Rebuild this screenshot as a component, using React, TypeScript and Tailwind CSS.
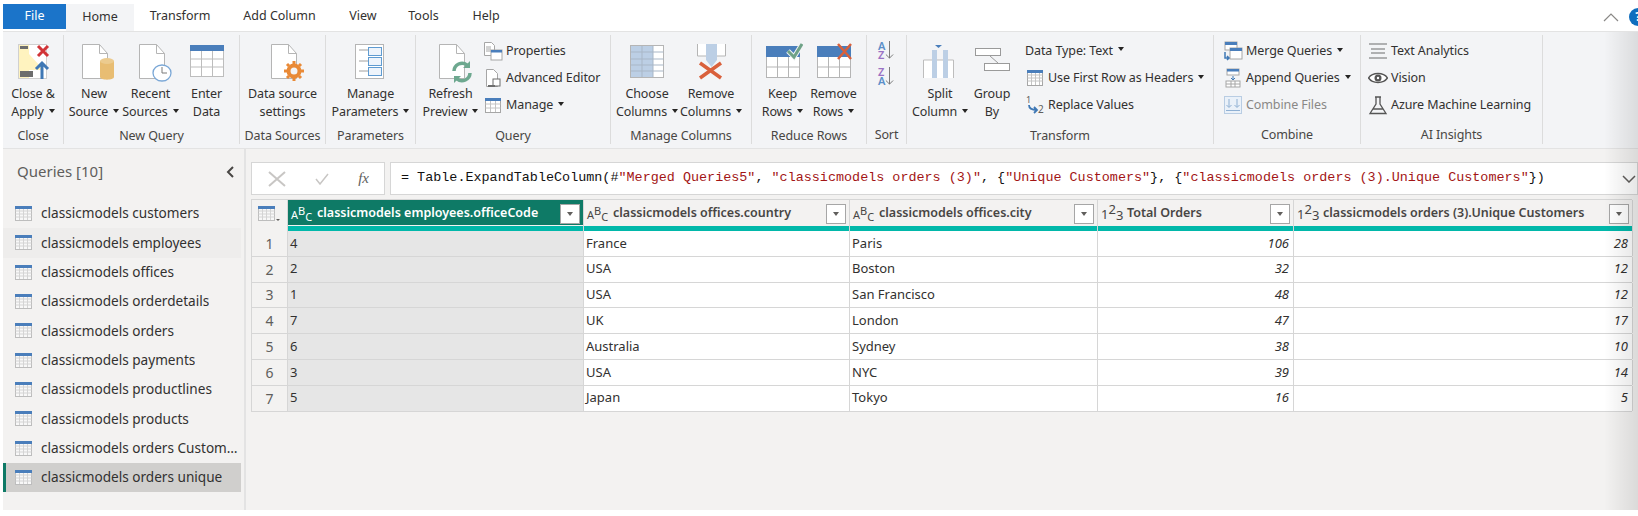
import React from 'react';

const font = "font-['Noto_Sans','Open_Sans',sans-serif]";

const TableIcon = ({ className = 'w-[17px] h-[15px]' }: { className?: string }) => (
  <svg viewBox="0 0 17 15" className={className}>
    <rect x="0.5" y="0.5" width="16" height="14" fill="#f8f8f8" stroke="#bdbdbd" />
    <path d="M0.5 5h16M0.5 8h16M0.5 11h16M4.500 3v11M8.500 3v11M12.500 3v11" stroke="#d4d4d4" strokeWidth="1" fill="none" />
    <rect x="0" y="0" width="17" height="3" fill="#4a7ebb" />
  </svg>
);

const Doc = ({ children }: { children?: React.ReactNode }) => (
  <svg viewBox="0 0 40 38" className="w-[40px] h-[38px] overflow-visible">
    <path d="M8.500 2.500h17l8 9v25h-25z" fill="#fff" stroke="#b5b5b5" />
    <path d="M25.500 2.500v9h8" fill="none" stroke="#b5b5b5" />
    {children}
  </svg>
);

const CloseApply = () => (
  <svg viewBox="0 0 40 38" className="w-[40px] h-[38px]">
    <rect x="5.500" y="2.500" width="28" height="34" fill="#fff" stroke="#d0d0d0" />
    <path d="M6 3h10v33H6z" fill="#fff3bf" />
    <path d="M16 12l12 13v3H16z" fill="#fff3bf" />
    <rect x="7" y="4" width="8" height="3" fill="#6d6d6d" />
    <rect x="7" y="29" width="13" height="6" fill="#6d6d6d" />
    <path d="M25 4l10 10M35 4L25 14" stroke="#d13438" strokeWidth="3" />
    <path d="M29 37V21M23 27l6-6 6 6" stroke="#3f78b5" strokeWidth="3" fill="none" />
  </svg>
);

const EnterData = () => (
  <svg viewBox="0 0 40 38" className="w-[40px] h-[38px]">
    <rect x="3.500" y="3.500" width="33" height="31" fill="#fff" stroke="#bdbdbd" />
    <path d="M3.500 17h33M3.500 25h33M14.500 9v25M25.500 9v25" stroke="#bdbdbd" fill="none" />
    <rect x="3" y="3" width="34" height="6" fill="#4a7ebb" />
  </svg>
);

const ManageParams = () => (
  <svg viewBox="0 0 40 38" className="w-[40px] h-[38px]">
    <rect x="4.500" y="2.500" width="28" height="34" fill="#fff" stroke="#b5b5b5" />
    <path d="M8 8h9M8 19h9M8 29h9" stroke="#a0a0a0" />
    <rect x="17.500" y="5.500" width="13" height="8" fill="#eef4fb" stroke="#5f9bd1" />
    <rect x="17.500" y="15.500" width="13" height="8" fill="#eef4fb" stroke="#5f9bd1" />
    <rect x="17.500" y="25.500" width="13" height="8" fill="#eef4fb" stroke="#5f9bd1" />
  </svg>
);

const ChooseColumns = () => (
  <svg viewBox="0 0 40 38" className="w-[40px] h-[38px]">
    <rect x="3.500" y="3.500" width="33" height="32" fill="#fff" stroke="#b5b5b5" />
    <rect x="4" y="4" width="22" height="31" fill="#bccfe5" />
    <path d="M3.500 10h33M3.500 17h33M3.500 23h33M3.500 29h33M15 4v31M26 4v31" stroke="#a9b7c7" fill="none" />
  </svg>
);

const RemoveColumns = () => (
  <svg viewBox="0 0 40 38" className="w-[40px] h-[38px]">
    <path d="M6.500 2v12h28V2" fill="#fff" stroke="#b5b5b5" />
    <path d="M15 2h11v16l-5.500 7-5.500-7z" fill="#bccfe5" />
    <path d="M9 21l21 15M30 21L9 36" stroke="#d9603b" strokeWidth="3.500" />
  </svg>
);

const RowsIcon = ({ keep }: { keep?: boolean }) => (
  <svg viewBox="0 0 40 38" className="w-[40px] h-[38px]">
    <rect x="3.500" y="14.500" width="33" height="21" fill="#fff" stroke="#b5b5b5" />
    <path d="M3.500 25h33M14.500 14v21M25.500 14v21" stroke="#b5b5b5" fill="none" />
    <rect x="3" y="4" width="34" height="11" fill="#4a7ebb" />
    {keep ? (
      <>
        <path d="M25 9l6 6 8-13" stroke="#f3f4f6" strokeWidth="5" fill="none" />
        <path d="M25 9l6 6 8-13" stroke="#6fa287" strokeWidth="3" fill="none" />
      </>
    ) : (
      <path d="M24 2l13 15M37 2L24 17" stroke="#d9603b" strokeWidth="2.500" />
    )}
  </svg>
);

const SplitColumn = () => (
  <svg viewBox="0 0 40 38" className="w-[40px] h-[38px]">
    <path d="M3.500 36V18h30v18" fill="#fff" stroke="#bdbdbd" />
    <rect x="12" y="8" width="5" height="28" fill="#bccfe5" />
    <rect x="23" y="8" width="5" height="28" fill="#bccfe5" />
    <path d="M15 3h7l-3.500 3z" fill="#4a7ebb" />
  </svg>
);

const GroupBy = () => (
  <svg viewBox="0 0 40 38" className="w-[40px] h-[38px]">
    <rect x="3.500" y="6.500" width="25" height="7" fill="#fff" stroke="#9a9a9a" />
    <rect x="12.500" y="21.500" width="25" height="7" fill="#fff" stroke="#9a9a9a" />
    <path d="M18 14l8 7" stroke="#9a9a9a" />
  </svg>
);

const SmallSvg = ({ children }: { children: React.ReactNode }) => (
  <svg viewBox="0 0 20 20" className="w-[20px] h-[20px] shrink-0">
    {children}
  </svg>
);

const SmallIcons: Record<string, React.ReactNode> = {
  properties: (
    <>
      <path d="M1.500 1.500h7l3 3v10h-10z" fill="#fff" stroke="#a6a6a6" />
      <path d="M3 6h5M3 8h5M3 10h5" stroke="#a6a6a6" />
      <rect x="8" y="9" width="11" height="10" fill="#fff" stroke="#a6a6a6" />
      <rect x="8" y="9" width="11" height="2.500" fill="#4a7ebb" />
    </>
  ),
  editor: (
    <>
      <path d="M3.500 1.500h7l4 4v13h-11z" fill="#fff" stroke="#a6a6a6" />
      <rect x="10" y="11" width="7" height="7" fill="#fff" stroke="#6d6d6d" />
      <rect x="5" y="17" width="7" height="2" fill="#6d6d6d" />
    </>
  ),
  manage: (
    <>
      <rect x="2.500" y="3.500" width="15" height="14" fill="#fff" stroke="#a6a6a6" />
      <path d="M2.500 9h15M2.500 13h15M7.500 6v11M12.500 6v11" stroke="#c4c4c4" fill="none" />
      <rect x="2" y="3" width="16" height="3" fill="#4a7ebb" />
    </>
  ),
  firstRow: (
    <>
      <rect x="2.500" y="2.500" width="15" height="15" fill="#fff" stroke="#a6a6a6" />
      <path d="M2.500 7h15M2.500 10h15M2.500 13h15M6.500 2v15M10.500 2v15M14.500 2v15" stroke="#c4c4c4" fill="none" />
      <rect x="2" y="2" width="16" height="3" fill="#4a7ebb" />
    </>
  ),
  replace: (
    <>
      <text x="1" y="8" fontSize="9" fill="#605e5c">1</text>
      <text x="13" y="18" fontSize="10" fill="#605e5c">2</text>
      <path d="M4 10c0 4 3 5 8 5M9 12l3 3-3 3" stroke="#3f78b5" strokeWidth="1.800" fill="none" />
    </>
  ),
  merge: (
    <>
      <rect x="2" y="1" width="12" height="8" fill="#fff" stroke="#a6a6a6" />
      <rect x="2" y="1" width="12" height="3" fill="#4a7ebb" />
      <rect x="7" y="7" width="12" height="11" fill="#fff" stroke="#a6a6a6" />
      <rect x="7" y="7" width="12" height="3" fill="#4a7ebb" />
      <path d="M2 11v6h3M4 15l2 2-2 2" stroke="#3f78b5" strokeWidth="1.500" fill="none" />
    </>
  ),
  append: (
    <>
      <rect x="4" y="1" width="12" height="6" fill="#fff" stroke="#a6a6a6" />
      <rect x="4" y="1" width="12" height="2.500" fill="#4a7ebb" />
      <path d="M10 8v4M8 10l2 2 2-2" stroke="#3f78b5" fill="none" />
      <rect x="3" y="13" width="14" height="6" fill="#fff" stroke="#a6a6a6" />
      <path d="M3 16h14M8 13v6M12 13v6" stroke="#a6a6a6" />
    </>
  ),
  combine: (
    <>
      <rect x="1.500" y="1.500" width="17" height="17" fill="#eaf1f9" stroke="#b9cde3" />
      <path d="M6 4v8M3.500 10L6 12.500 8.500 10M14 4v8M11.500 10l2.500 2.500 2.500-2.500M3 15.500h14" stroke="#8fb0d3" fill="none" />
    </>
  ),
  text: <path d="M1 3h18M3 8h14M3 12h14M1 17h18" stroke="#6d6d6d" strokeWidth="1.200" />,
  vision: (
    <>
      <path d="M0.500 10c4-6 15-6 19 0-4 6-15 6-19 0z" fill="#fff" stroke="#555" strokeWidth="1.500" />
      <circle cx="10" cy="10" r="3.500" fill="#555" />
      <circle cx="10" cy="10" r="1.200" fill="#fff" />
    </>
  ),
  azure: <path d="M7 2h6M8 2v7L2 18.500h16L12 9V2M5 14h10" stroke="#555" strokeWidth="1.300" fill="none" />,
};

const Caret = () => (
  <span className="inline-block ml-[5px] align-middle w-0 h-0 border-x-[3.500px] border-x-transparent border-t-[4px] border-t-[#252423] mb-[3px]" />
);

const Big = ({
  width,
  icon,
  line1,
  line2,
  caret,
}: {
  width: number;
  icon: React.ReactNode;
  line1: string;
  line2: string;
  caret?: boolean;
}) => (
  <div className="flex flex-col items-center shrink-0" style={{ width }}>
    <div className="h-[38px] mt-[6px] mb-[5px] flex justify-center">{icon}</div>
    <div className="h-[18px] leading-[18px] whitespace-nowrap">{line1}</div>
    <div className="h-[18px] leading-[18px] whitespace-nowrap">
      {line2}
      {caret && <Caret />}
    </div>
  </div>
);

const Small = ({ icon, label, caret, dim }: { icon: string; label: string; caret?: boolean; dim?: boolean }) => (
  <div className={`h-[27px] flex items-center gap-[3px] whitespace-nowrap ${dim ? 'text-[#8a8886]' : ''}`}>
    <SmallSvg>{SmallIcons[icon]}</SmallSvg>
    <span>
      {label}
      {caret && <Caret />}
    </span>
  </div>
);

const Group = ({
  width,
  label,
  className = '',
  children,
}: {
  width: number;
  label: string;
  className?: string;
  children: React.ReactNode;
}) => (
  <div className="h-[109px] mt-[3px] border-r border-[#dcdcdc] flex flex-col shrink-0" style={{ width }}>
    <div className={`h-[89px] pt-[1px] flex ${className}`}>{children}</div>
    <div className="text-center text-[#484644] leading-[18px] mt-[6px]">{label}</div>
  </div>
);

const queries = [
  'classicmodels customers',
  'classicmodels employees',
  'classicmodels offices',
  'classicmodels orderdetails',
  'classicmodels orders',
  'classicmodels payments',
  'classicmodels productlines',
  'classicmodels products',
  'classicmodels orders Customers',
  'classicmodels orders unique',
];

const rows = [
  ['4', 'France', 'Paris', '106', '28'],
  ['2', 'USA', 'Boston', '32', '12'],
  ['1', 'USA', 'San Francisco', '48', '12'],
  ['7', 'UK', 'London', '47', '17'],
  ['6', 'Australia', 'Sydney', '38', '10'],
  ['3', 'USA', 'NYC', '39', '14'],
  ['5', 'Japan', 'Tokyo', '16', '5'],
];

const gridCols = 'grid grid-cols-[36px_296px_266px_248px_196px_339px]';

const TypeGlyph = ({ kind, light }: { kind: 'abc' | '123'; light?: boolean }) => (
  <span className={`inline-flex items-start w-[21px] shrink-0 text-[11px] leading-none font-normal ${light ? 'text-white' : 'text-[#484644]'}`}>
    {kind === 'abc' ? (
      <>
        <span className="mt-[3px]">A</span>
        <span className="mt-[-1px]">B</span>
        <span className="mt-[5px]">C</span>
      </>
    ) : (
      <>
        <span className="mt-[3px] text-[13px]">1</span>
        <span className="text-[13px] mt-[-2px]">2</span>
        <span className="mt-[4px] text-[13px]">3</span>
      </>
    )}
  </span>
);

const HeaderCell = ({ kind, title, active }: { kind: 'abc' | '123'; title: string; active?: boolean }) => (
  <div className="border-r border-[#d6d6d6] flex flex-col">
    <div className={`h-[25px] flex items-center pl-[3px] pr-[3px] pt-[2px] font-semibold ${active ? 'bg-[#0e7a66] text-white' : 'bg-[#f3f2f1] text-[#484644]'}`}>
      <TypeGlyph kind={kind} light={active} />
      <span className="ml-[5px] whitespace-nowrap text-[12.500px] tracking-normal">{title}</span>
      <span className="ml-auto w-[20px] h-[20px] bg-white border border-[#a6a6a6] flex items-center justify-center">
        <span className="w-0 h-0 border-x-[3.500px] border-x-transparent border-t-[4px] border-t-[#605e5c]" />
      </span>
    </div>
    <div className="h-[1px] bg-[#f3f2f1]" />
    <div className="h-[5px] bg-[#01b8aa]" />
  </div>
);

export default function App() {
  return (
    <div className={`${font} relative w-[1638px] h-[516px] overflow-hidden bg-white pl-[3px] pt-[4px] pb-[6px] flex flex-col text-[12.500px] tracking-[-0.1px] text-[#323130]`}>
      {/* tabs */}
      <div className="h-[27px] flex text-[12.500px] tracking-normal text-[#323130] shrink-0">
        <div className="w-[63px] h-[25px] bg-[#1b74c9] text-white flex items-center justify-center">File</div>
        <div className="w-[68px] h-[27px] bg-[#f3f4f6] flex items-center justify-center">Home</div>
        <div className="w-[92px] flex items-center justify-center h-[25px]">Transform</div>
        <div className="w-[107px] flex items-center justify-center h-[25px]">Add Column</div>
        <div className="w-[60px] flex items-center justify-center h-[25px]">View</div>
        <div className="w-[61px] flex items-center justify-center h-[25px]">Tools</div>
        <div className="w-[64px] flex items-center justify-center h-[25px]">Help</div>
        <div className="ml-auto h-[25px] flex items-center gap-[10px] mr-[-9px]">
          <svg viewBox="0 0 16 10" className="w-[16px] h-[10px]">
            <path d="M1 9l7-7 7 7" stroke="#8a8886" strokeWidth="1.200" fill="none" />
          </svg>
          <span className="w-[18px] h-[18px] rounded-full bg-[#106ebe] text-white text-[12px] font-bold flex items-center justify-center">?</span>
        </div>
      </div>

      {/* ribbon */}
      <div className="h-[118px] bg-[#f3f4f6] border-t border-b border-[#e3e3e3] flex shrink-0 leading-[18px]">
        <Group width={61} label="Close">
          <Big width={60} icon={<CloseApply />} line1="Close &" line2="Apply" caret />
        </Group>
        <Group width={176} label="New Query" className="pl-[2px]">
          <Big
            width={56}
            icon={
              <Doc>
                <path d="M26 19v16c0 3.500 14 3.500 14 0V19z" fill="#e8bd73" />
                <ellipse cx="33" cy="19" rx="7" ry="3" fill="#eccb8f" />
              </Doc>
            }
            line1="New"
            line2="Source"
            caret
          />
          <Big
            width={57}
            icon={
              <Doc>
                <ellipse cx="31" cy="31" rx="9" ry="8" fill="#fff" stroke="#7aa7d6" strokeWidth="1.300" />
                <path d="M31 25v6h5" stroke="#7a7a7a" fill="none" />
              </Doc>
            }
            line1="Recent"
            line2="Sources"
            caret
          />
          <Big width={55} icon={<EnterData />} line1="Enter" line2="Data" />
        </Group>
        <Group width={86} label="Data Sources">
          <Big
            width={85}
            icon={
              <Doc>
                <circle cx="31" cy="29" r="5.500" fill="#f3f4f6" stroke="#e98a37" strokeWidth="4" />
                <path d="M31 19v3M31 36v3M21 29h3M38 29h3M24 22l2 2M36 34l2 2M24 36l2-2M36 24l2-2" stroke="#e98a37" strokeWidth="3" />
              </Doc>
            }
            line1="Data source"
            line2="settings"
          />
        </Group>
        <Group width={90} label="Parameters">
          <Big width={89} icon={<ManageParams />} line1="Manage" line2="Parameters" caret />
        </Group>
        <Group width={195} label="Query" className="pl-[5px]">
          <Big
            width={59}
            icon={
              <Doc>
                <path d="M23 29a8 8 0 0 1 13-6M39 31a8 8 0 0 1-13 6" stroke="#6da88f" strokeWidth="3.500" fill="none" />
                <path d="M39 19v7h-7zM23 41v-7h7z" fill="#6da88f" />
              </Doc>
            }
            line1="Refresh"
            line2="Preview"
            caret
          />
          <div className="ml-[3px] pt-[1px]">
            <Small icon="properties" label="Properties" />
            <Small icon="editor" label="Advanced Editor" />
            <Small icon="manage" label="Manage" caret />
          </div>
        </Group>
        <Group width={141} label="Manage Columns" className="pl-[4px]">
          <Big width={64} icon={<ChooseColumns />} line1="Choose" line2="Columns" caret />
          <Big width={64} icon={<RemoveColumns />} line1="Remove" line2="Columns" caret />
        </Group>
        <Group width={115} label="Reduce Rows" className="pl-[5px]">
          <Big width={51} icon={<RowsIcon keep />} line1="Keep" line2="Rows" caret />
          <Big width={51} icon={<RowsIcon />} line1="Remove" line2="Rows" caret />
        </Group>
        <Group width={40} label="Sort">
          <div className="w-full text-[11px] font-semibold leading-[9.500px] pt-[1px] pl-[11px]">
            <div className="flex items-center h-[26px]">
              <div>
                <div className="text-[#5b8fc9]">A</div>
                <div className="text-[#9a72c4]">Z</div>
              </div>
              <svg viewBox="0 0 10 20" className="w-[9px] h-[20px]">
                <path d="M5 0v19M1 15l4 4 4-4" stroke="#6d6d6d" fill="none" />
              </svg>
            </div>
            <div className="flex items-center h-[26px]">
              <div>
                <div className="text-[#9a72c4]">Z</div>
                <div className="text-[#5b8fc9]">A</div>
              </div>
              <svg viewBox="0 0 10 20" className="w-[9px] h-[20px]">
                <path d="M5 0v19M1 15l4 4 4-4" stroke="#6d6d6d" fill="none" />
              </svg>
            </div>
          </div>
        </Group>
        <Group width={307} label="Transform" className="pl-[5px]">
          <Big width={56} icon={<SplitColumn />} line1="Split" line2="Column" caret />
          <Big width={48} icon={<GroupBy />} line1="Group" line2="By" />
          <div className="ml-[9px] pt-[1px]">
            <div className="h-[27px] flex items-center whitespace-nowrap">
              Data Type: Text
              <Caret />
            </div>
            <Small icon="firstRow" label="Use First Row as Headers" caret />
            <Small icon="replace" label="Replace Values" />
          </div>
        </Group>
        <Group width={147} label="Combine" className="pl-[9px]">
          <div className="pt-[1px]">
            <Small icon="merge" label="Merge Queries" caret />
            <Small icon="append" label="Append Queries" caret />
            <Small icon="combine" label="Combine Files" dim />
          </div>
        </Group>
        <Group width={182} label="AI Insights" className="pl-[7px]">
          <div className="pt-[1px]">
            <Small icon="text" label="Text Analytics" />
            <Small icon="vision" label="Vision" />
            <Small icon="azure" label="Azure Machine Learning" />
          </div>
        </Group>
      </div>

      {/* body */}
      <div className="flex-1 flex min-h-0">
        <aside className="w-[243px] shrink-0 bg-[#f3f2f1] border-r-2 border-[#e3e3e3] flex flex-col tracking-normal">
          <div className="h-[45px] pl-[14px] pr-[10px] flex items-center justify-between text-[15px] text-[#605e5c] shrink-0">
            <span>Queries [10]</span>
            <svg viewBox="0 0 8 12" className="w-[8px] h-[12px]">
              <path d="M7 1L2 6l5 5" stroke="#484644" strokeWidth="2" fill="none" />
            </svg>
          </div>
          <div className="mt-[5px] w-[238px] text-[13.600px]">
            {queries.map((q, i) => (
              <div
                key={q}
                className={`h-[29.300px] flex items-center pl-[9px] gap-[9px] border-l-[3px] ${
                  i === 9 ? 'border-[#0e7a66] bg-[#d0cfcd]' : i === 1 ? 'border-transparent bg-[#eeedec]' : 'border-transparent'
                }`}
              >
                <TableIcon className="w-[17px] h-[15px] shrink-0" />
                <span className="truncate">{q}</span>
              </div>
            ))}
          </div>
        </aside>

        <main className="flex-1 min-w-0 bg-[#f3f2f1] pl-[5px] pt-[13px] tracking-normal">
          <div className="flex gap-[5px] h-[33px]">
            <div className="w-[134px] bg-white border border-[#d6d6d6] flex items-center justify-between pl-[16px] pr-[15px] shrink-0">
              <svg viewBox="0 0 18 16" className="w-[18px] h-[16px]">
                <path d="M1 1l16 14M17 1L1 15" stroke="#c8c6c4" strokeWidth="2" />
              </svg>
              <svg viewBox="0 0 14 12" className="w-[14px] h-[12px]">
                <path d="M1 6l4 5 8-10" stroke="#c8c6c4" strokeWidth="1.500" fill="none" />
              </svg>
              <span className="font-['Liberation_Serif',serif] italic text-[15px] text-[#605e5c]">fx</span>
            </div>
            <div className="flex-1 bg-white border border-[#d6d6d6] flex items-center pl-[10px] font-['Liberation_Mono',monospace] text-[13.430px] whitespace-nowrap overflow-hidden text-[#111]">
              <span>= Table.ExpandTableColumn(#</span>
              <span className="text-[#a31515]">"Merged Queries5"</span>
              <span>,&nbsp;</span>
              <span className="text-[#a31515]">"classicmodels orders (3)"</span>
              <span>,&nbsp;{'{'}</span>
              <span className="text-[#a31515]">"Unique Customers"</span>
              <span>{'}'},&nbsp;{'{'}</span>
              <span className="text-[#a31515]">"classicmodels orders (3).Unique Customers"</span>
              <span>{'}'})</span>
              <svg viewBox="0 0 14 8" className="ml-auto mr-[1px] w-[14px] h-[8px] shrink-0">
                <path d="M1 1l6 6 6-6" stroke="#605e5c" strokeWidth="1.500" fill="none" />
              </svg>
            </div>
          </div>

          <div className="mt-[4px] w-[1381px] border-t border-l border-[#d6d6d6] text-[13px]">
            <div className={gridCols}>
              <div className="border-r border-[#d6d6d6] bg-[#f3f2f1] flex items-start pl-[6px] pt-[6px] h-[31px] gap-[1px]">
                <TableIcon className="w-[17px] h-[15px]" />
                <span className="mt-[13px] w-0 h-0 border-x-[2px] border-x-transparent border-t-[2px] border-t-[#605e5c]" />
              </div>
              <HeaderCell kind="abc" title="classicmodels employees.officeCode" active />
              <HeaderCell kind="abc" title="classicmodels offices.country" />
              <HeaderCell kind="abc" title="classicmodels offices.city" />
              <HeaderCell kind="123" title="Total Orders" />
              <HeaderCell kind="123" title="classicmodels orders (3).Unique Customers" />
            </div>
            {rows.map((r, i) => (
              <div key={i} className={`${gridCols} h-[25.800px] border-b border-[#d6d6d6]`}>
                <div className="border-r border-[#d6d6d6] flex items-center justify-center text-[#605e5c] text-[14px]">{i + 1}</div>
                <div className="border-r border-[#d6d6d6] bg-[#e6e6e6] flex items-center pl-[2px]">{r[0]}</div>
                <div className="border-r border-[#d6d6d6] bg-white flex items-center pl-[2px]">{r[1]}</div>
                <div className="border-r border-[#d6d6d6] bg-white flex items-center pl-[2px]">{r[2]}</div>
                <div className="border-r border-[#d6d6d6] bg-white flex items-center justify-end pr-[4px] italic">{r[3]}</div>
                <div className="border-r border-[#d6d6d6] bg-white flex items-center justify-end pr-[4px] italic">{r[4]}</div>
              </div>
            ))}
          </div>
        </main>
      </div>

      {/* window shadow on the right edge */}
      <div className="absolute right-0 top-[32px] bottom-[6px] w-[34px] bg-gradient-to-r from-transparent to-black/10 pointer-events-none" />
    </div>
  );
}
